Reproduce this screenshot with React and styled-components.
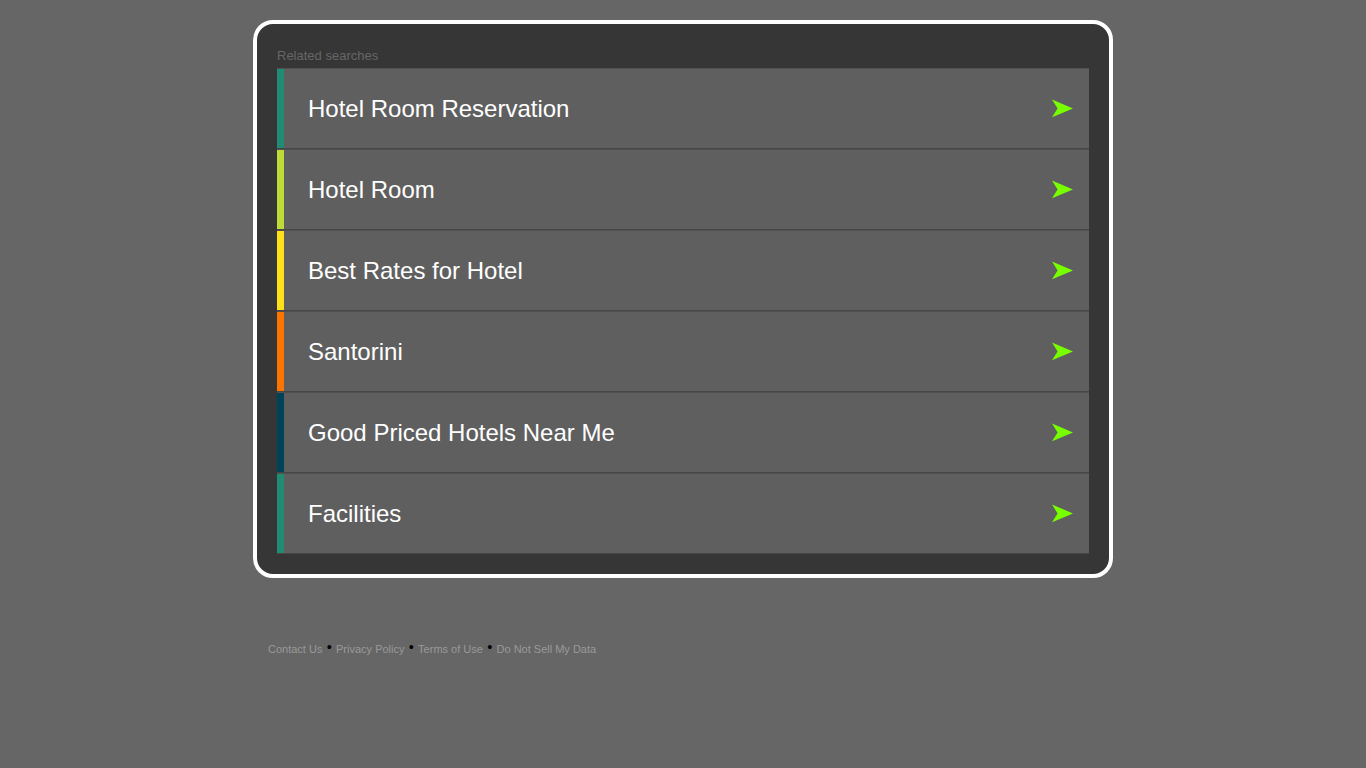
import React from "react";
import styled, { createGlobalStyle } from "styled-components";

const GlobalStyle = createGlobalStyle`
  * { box-sizing: border-box; }
  body {
    margin: 0;
    background: #666666;
    font-family: "Liberation Sans", Arial, sans-serif;
  }
`;

const Page = styled.div`
  max-width: 860px;
  margin: 0 auto;
  padding: 20px 0;
`;

const Card = styled.main`
  padding: 20px;
  border: 4px solid #ffffff;
  border-radius: 20px;
  background: #363636;
`;

const Heading = styled.h1`
  margin: 0;
  color: #666666;
  font-size: 13px;
  font-weight: 400;
  line-height: 24px;
`;

const List = styled.ul`
  margin: 0;
  padding: 0;
  list-style: none;
`;

const Item = styled.li`
  border-top: 1px solid #505050;
  border-bottom: 1px solid #474747;
`;

const SearchLink = styled.a`
  display: flex;
  align-items: center;
  justify-content: space-between;
  min-height: 79px;
  padding: 0 16px 0 24px;
  border-left: 7px solid ${(props) => props.$accent};
  background: #5f5f5f;
  color: #ffffff;
  font-size: 24px;
  line-height: 28px;
  text-decoration: none;
`;

const ArrowIcon = styled.svg`
  flex: none;
  width: 21px;
  height: 19px;
  fill: #77ff00;
`;

const Footer = styled.footer`
  margin-top: 60px;
  padding: 0 15px;
  color: #000000;
  font-family: "Liberation Serif", "Times New Roman", serif;
  font-size: 16px;
  line-height: 20px;
`;

const FooterLink = styled.a`
  color: #999999;
  font-family: "Liberation Sans", Arial, sans-serif;
  font-size: 11px;
  text-decoration: none;
`;

const searches = [
  { label: "Hotel Room Reservation", accent: "#218c74" },
  { label: "Hotel Room", accent: "#bfdb38" },
  { label: "Best Rates for Hotel", accent: "#ffe11a" },
  { label: "Santorini", accent: "#fd7400" },
  { label: "Good Priced Hotels Near Me", accent: "#004358" },
  { label: "Facilities", accent: "#218c74" },
];

const footerLinks = ["Contact Us", "Privacy Policy", "Terms of Use", "Do Not Sell My Data"];

export default function App() {
  return (
    <>
      <GlobalStyle />
      <Page>
        <Card>
          <Heading>Related searches</Heading>
          <List>
            {searches.map(({ label, accent }) => (
              <Item key={label}>
                <SearchLink href="#" $accent={accent}>
                  {label}
                  <ArrowIcon viewBox="0 0 21 19" aria-hidden="true">
                    <path d="M0 0.5 L21 9.4 L0 18.3 L5.6 9.4 Z" />
                  </ArrowIcon>
                </SearchLink>
              </Item>
            ))}
          </List>
        </Card>
        <Footer>
          {footerLinks.map((label, index) => (
            <React.Fragment key={label}>
              {index > 0 && " • "}
              <FooterLink href="#">{label}</FooterLink>
            </React.Fragment>
          ))}
        </Footer>
      </Page>
    </>
  );
}
